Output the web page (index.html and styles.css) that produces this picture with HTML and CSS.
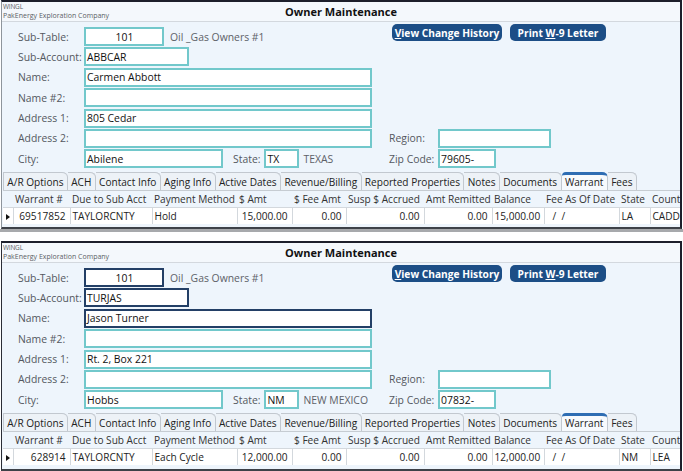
FILE: index.html
```html
<!DOCTYPE html>
<html>
<head>
<meta charset="utf-8">
<title>Owner Maintenance</title>
<link rel="stylesheet" href="styles.css">
</head>
<body>
<div class="window">
  <div class="titlebar">
    <div class="brand"><div class="app">WINGL</div><div class="co">PakEnergy Exploration Company</div></div>
    <div class="title">Owner Maintenance</div>
    <div></div>
  </div>
  <div class="form">
    <div class="lbl">Sub-Table:</div>
    <div class="field"><span class="inp w-sub center">101</span><span class="note">Oil _Gas Owners #1</span></div>
    <div class="buttons"><span class="btn w-hist"><span><u>V</u>iew Change History</span></span><span class="btn w-w9"><span>Print <u>W</u>-9 Letter</span></span></div>
    <div class="lbl">Sub-Account:</div>
    <div class="field"><span class="inp w-acct">ABBCAR</span></div>
    <div class="lbl">Name:</div>
    <div class="field"><span class="inp w-full">Carmen Abbott</span></div>
    <div class="lbl">Name #2:</div>
    <div class="field"><span class="inp w-full"></span></div>
    <div class="lbl">Address 1:</div>
    <div class="field"><span class="inp w-full">805 Cedar</span></div>
    <div class="lbl">Address 2:</div>
    <div class="field"><span class="inp w-full"></span></div>
    <div class="rlbl">Region:</div>
    <div class="rfield"><span class="inp w-region"></span></div>
    <div class="lbl">City:</div>
    <div class="field"><span class="inp w-city">Abilene</span><span class="slbl">State:</span><span class="inp w-state">TX</span><span class="note">TEXAS</span></div>
    <div class="rlbl">Zip Code:</div>
    <div class="rfield"><span class="inp w-zip">79605-</span></div>
  </div>
  <div class="tabs">
    <span class="tab">A/R Options</span><span class="tab">ACH</span><span class="tab">Contact Info</span><span class="tab">Aging Info</span><span class="tab">Active Dates</span><span class="tab">Revenue/Billing</span><span class="tab">Reported Properties</span><span class="tab">Notes</span><span class="tab">Documents</span><span class="tab active">Warrant</span><span class="tab">Fees</span>
  </div>
  <table class="grid">
    <colgroup><col class="c-ind"><col class="c-war"><col class="c-due"><col class="c-pay"><col class="c-amt"><col class="c-fee"><col class="c-susp"><col class="c-rem"><col class="c-bal"><col class="c-date"><col class="c-st"><col class="c-cty"></colgroup>
    <thead><tr><th></th><th>Warrant #</th><th>Due to Sub Acct</th><th>Payment Method</th><th>$ Amt</th><th>$ Fee Amt</th><th>Susp $ Accrued</th><th>Amt Remitted</th><th>Balance</th><th>Fee As Of Date</th><th>State</th><th>County</th></tr></thead>
    <tbody><tr><td class="ind"><span class="arrow"></span></td><td class="num">69517852</td><td>TAYLORCNTY</td><td>Hold</td><td class="num">15,000.00</td><td class="num">0.00</td><td class="num">0.00</td><td class="num">0.00</td><td class="num">15,000.00</td><td class="date">/ &nbsp;/</td><td>LA</td><td>CADDO</td></tr></tbody>
  </table>
</div>
<div class="gap"></div>
<div class="window second">
  <div class="titlebar">
    <div class="brand"><div class="app">WINGL</div><div class="co">PakEnergy Exploration Company</div></div>
    <div class="title">Owner Maintenance</div>
    <div></div>
  </div>
  <div class="form">
    <div class="lbl">Sub-Table:</div>
    <div class="field"><span class="inp w-sub center focus">101</span><span class="note">Oil _Gas Owners #1</span></div>
    <div class="buttons"><span class="btn w-hist"><span><u>V</u>iew Change History</span></span><span class="btn w-w9"><span>Print <u>W</u>-9 Letter</span></span></div>
    <div class="lbl">Sub-Account:</div>
    <div class="field"><span class="inp w-acct focus">TURJAS</span></div>
    <div class="lbl">Name:</div>
    <div class="field"><span class="inp w-full focus">Jason Turner</span></div>
    <div class="lbl">Name #2:</div>
    <div class="field"><span class="inp w-full"></span></div>
    <div class="lbl">Address 1:</div>
    <div class="field"><span class="inp w-full">Rt. 2, Box 221</span></div>
    <div class="lbl">Address 2:</div>
    <div class="field"><span class="inp w-full"></span></div>
    <div class="rlbl">Region:</div>
    <div class="rfield"><span class="inp w-region"></span></div>
    <div class="lbl">City:</div>
    <div class="field"><span class="inp w-city">Hobbs</span><span class="slbl">State:</span><span class="inp w-state">NM</span><span class="note">NEW MEXICO</span></div>
    <div class="rlbl">Zip Code:</div>
    <div class="rfield"><span class="inp w-zip">07832-</span></div>
  </div>
  <div class="tabs">
    <span class="tab">A/R Options</span><span class="tab">ACH</span><span class="tab">Contact Info</span><span class="tab">Aging Info</span><span class="tab">Active Dates</span><span class="tab">Revenue/Billing</span><span class="tab">Reported Properties</span><span class="tab">Notes</span><span class="tab">Documents</span><span class="tab active">Warrant</span><span class="tab">Fees</span>
  </div>
  <table class="grid">
    <colgroup><col class="c-ind"><col class="c-war"><col class="c-due"><col class="c-pay"><col class="c-amt"><col class="c-fee"><col class="c-susp"><col class="c-rem"><col class="c-bal"><col class="c-date"><col class="c-st"><col class="c-cty"></colgroup>
    <thead><tr><th></th><th>Warrant #</th><th>Due to Sub Acct</th><th>Payment Method</th><th>$ Amt</th><th>$ Fee Amt</th><th>Susp $ Accrued</th><th>Amt Remitted</th><th>Balance</th><th>Fee As Of Date</th><th>State</th><th>County</th></tr></thead>
    <tbody><tr><td class="ind"><span class="arrow"></span></td><td class="num">628914</td><td>TAYLORCNTY</td><td>Each Cycle</td><td class="num">12,000.00</td><td class="num">0.00</td><td class="num">0.00</td><td class="num">0.00</td><td class="num">12,000.00</td><td class="date">/ &nbsp;/</td><td>NM</td><td>LEA</td></tr></tbody>
  </table>
</div>
</body>
</html>
```
FILE: styles.css
```css
* { box-sizing: border-box; }
html, body { margin: 0; padding: 0; background: #ffffff; }
body {
  font-family: "Open Sans", "Noto Sans", sans-serif;
  font-size: 10.1px;
  color: #1a1a1a;
  width: 683px;
  height: 471px;
  overflow: hidden;
}
.window {
  margin-left: 1px;
  width: 681px;
  height: 229px;
  background: #eef5fc;
  border-top: 2px solid #1d1f2b;
  border-left: 1px solid #8e959c;
  border-right: 2px solid #1d1f2b;
  border-bottom: 2px solid #3d4148;
  overflow: hidden;
}
.window.second {
  height: 230px;
  border-left-color: #2a2d36;
}
.gap {
  height: 12px;
  border-top: 3px solid #a7a9ac;
}
.titlebar {
  height: 20px;
  background: #f4f8fc;
  border-bottom: 1px solid #d3d8de;
  display: grid;
  grid-template-columns: 1fr auto 1fr;
  align-items: center;
}
.brand { padding-left: 1px; color: #5b5f66; font-size: 7px; line-height: 8.5px; }
.brand .app { font-size: 6.5px; letter-spacing: -0.2px; }
.title { font-weight: 700; font-size: 11px; color: #111; }
.form {
  display: grid;
  grid-template-columns: 66px 288px 17px 49px 113px 1fr;
  grid-auto-rows: 19px;
  row-gap: 1.4px;
  padding: 5px 0 0 16px;
}
.lbl { grid-column: 1; align-self: center; color: #545860; white-space: nowrap; font-size: 10.4px; }
.field { grid-column: 2; display: flex; align-items: center; white-space: nowrap; }
.rlbl { grid-column: 4; align-self: center; color: #545860; white-space: nowrap; font-size: 10.4px; }
.rfield { grid-column: 5; display: flex; align-items: center; }
.buttons { grid-column: 4 / 7; display: flex; gap: 8px; margin-left: 3px; margin-top: -3px; align-self: start; }
.btn {
  height: 17px;
  background: #1c4e86;
  color: #ffffff;
  font-weight: 700;
  font-size: 10.2px;
  border-radius: 5px;
  display: flex;
  align-items: center;
  justify-content: center;
  white-space: nowrap;
}
.w-hist { width: 110px; }
.w-w9 { width: 96px; }
.inp {
  height: 19px;
  border: 2px solid #72c8cb;
  background: #ffffff;
  display: flex;
  align-items: center;
  padding-left: 1px;
  color: #111;
  font-size: 10.4px;
}
.inp.focus { border-color: #233f66; }
.center { justify-content: center; }
.w-sub { width: 80px; }
.w-acct { width: 105px; }
.w-full { width: 288px; }
.w-city { width: 139px; }
.w-state { width: 35px; }
.w-region { width: 113px; }
.w-zip { width: 58px; }
.note { color: #5d6168; margin-left: 6px; font-size: 10.4px; }
.w-state + .note { margin-left: 4px; }
.slbl { color: #545860; margin-left: 10px; margin-right: 4px; font-size: 10.4px; }
.tabs {
  display: flex;
  margin-top: 3.6px;
  margin-left: 1px;
  height: 18px;
}
.tab {
  height: 18px;
  padding: 1px 3.4px 0 3.3px;
  border: 1px solid #c2c8cf;
  border-bottom: none;
  border-left: none;
  border-top-right-radius: 6px 5px;
  background: #edf2f7;
  color: #222;
  display: flex;
  align-items: center;
  white-space: nowrap;
}
.tab:first-child { border-left: 1px solid #c2c8cf; }
.tab.active {
  background: #f7fafd;
  border-top: 3px solid #2e6db3;
  border-top-left-radius: 4px;
  padding-top: 0;
}
.grid {
  border-collapse: collapse;
  table-layout: fixed;
  width: 707px;
  margin-left: 1px;
  border-top: 1px solid #c6ccd2;
}
.grid th, .grid td {
  height: 17px;
  padding: 0 2px;
  white-space: nowrap;
  overflow: hidden;
  font-weight: 400;
  text-align: left;
  color: #222;
}
.grid th { background: #eef5fc; color: #333; }
.grid td { background: #ffffff; border-right: 1px solid #d3d8dd; border-top: 1px solid #d3d8dd; }
.grid td.num { text-align: right; padding-right: 4px; }
.grid td.date { padding-left: 8px; }
.grid td.ind { padding: 0; text-align: center; }
.arrow {
  display: inline-block;
  border-left: 4px solid #111;
  border-top: 3.5px solid transparent;
  border-bottom: 3.5px solid transparent;
  vertical-align: middle;
}
.c-ind { width: 10px; }
.c-war { width: 57px; }
.c-due { width: 82px; }
.c-pay { width: 85px; }
.c-amt { width: 55px; }
.c-fee { width: 54px; }
.c-susp { width: 78px; }
.c-rem { width: 68px; }
.c-bal { width: 52px; }
.c-date { width: 75px; }
.c-st { width: 31px; }
.c-cty { width: 60px; }
```
